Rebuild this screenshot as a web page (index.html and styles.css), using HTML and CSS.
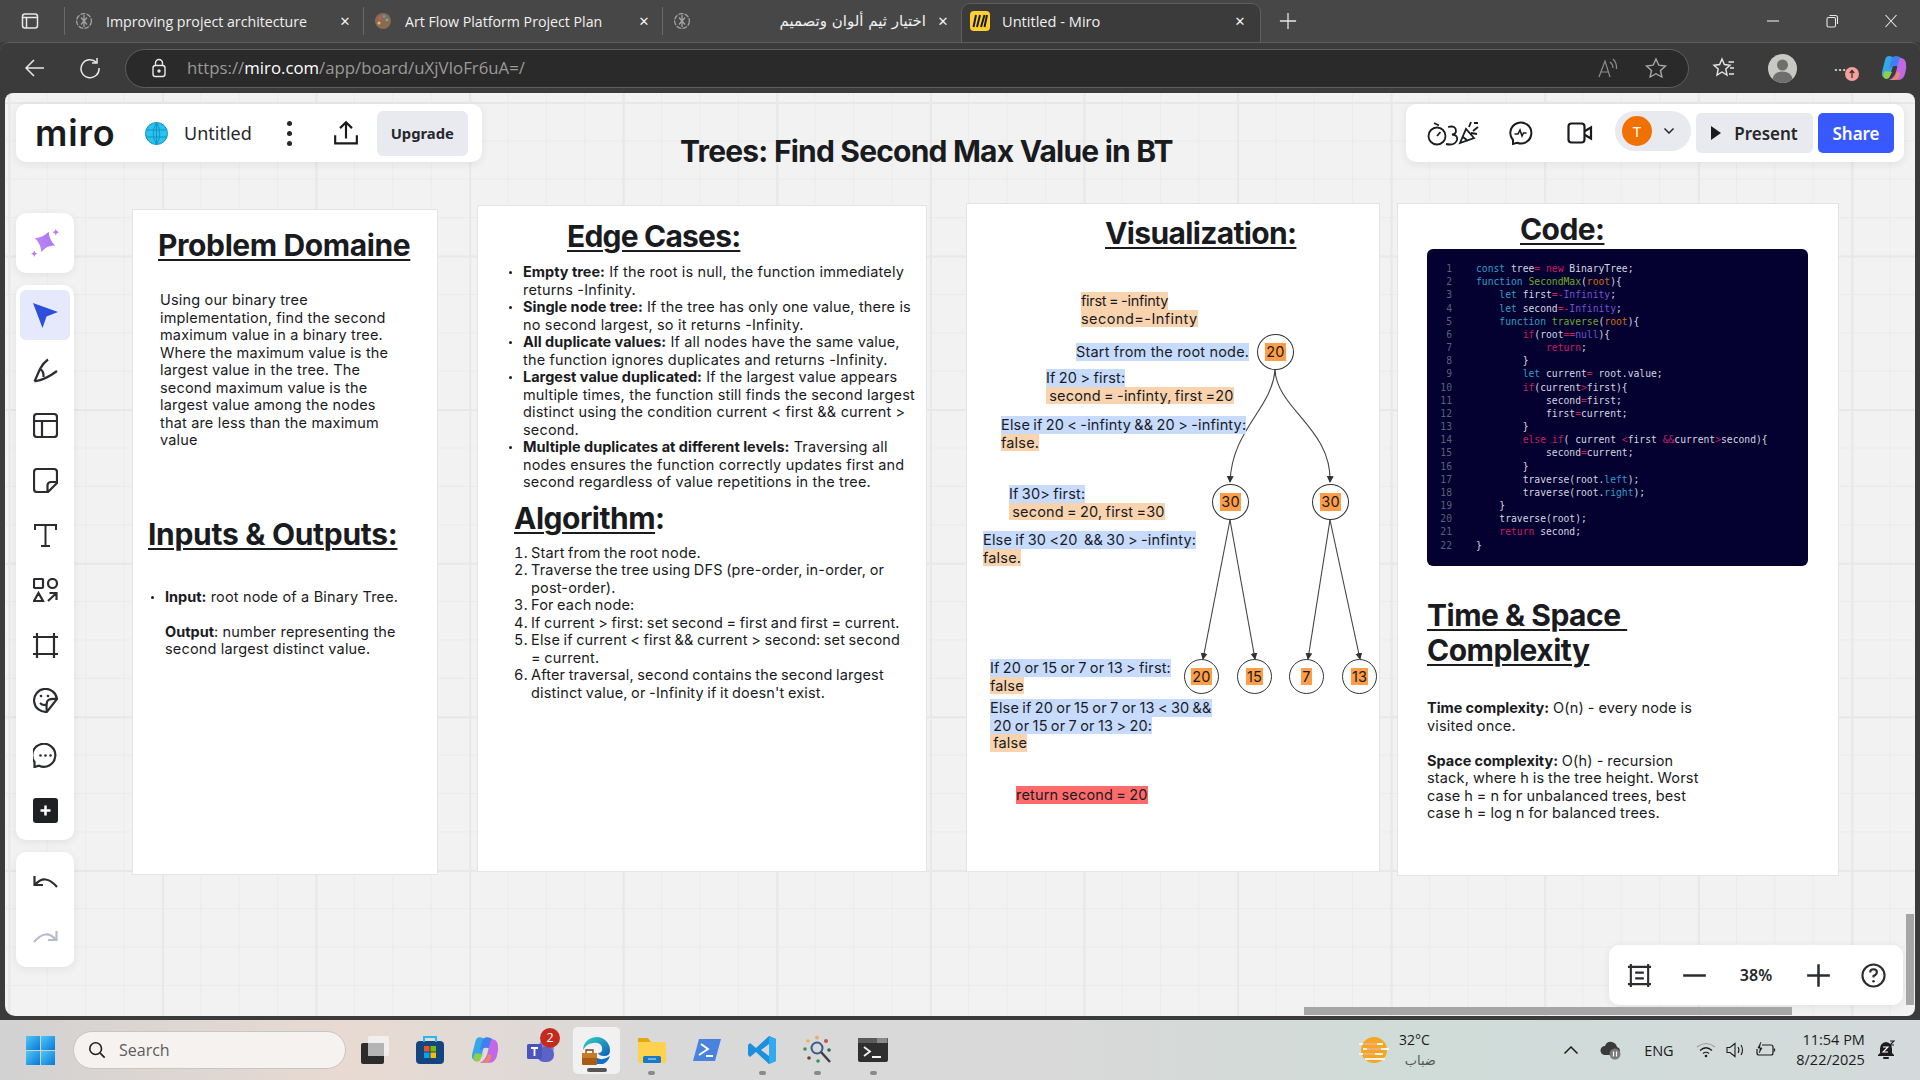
FILE: index.html
```html
<!DOCTYPE html>
<html lang="en">
<head>
    <meta charset="UTF-8">
    <title>Untitled - Miro</title>
    <link rel="stylesheet" href="styles.css">
</head>
<body>
    <svg class="defs" width="0" height="0">
        <defs>
            <marker id="arrow" markerWidth="8" markerHeight="8" refX="6" refY="4" orient="auto" markerUnits="userSpaceOnUse">
                <path d="M0 0.5 L7 4 L0 7.5 Z" fill="#333"/>
            </marker>
            <linearGradient id="spark" x1="0" y1="1" x2="1" y2="0"><stop offset="0" stop-color="#c58bf5"/><stop offset="1" stop-color="#a472f2"/></linearGradient>
            <linearGradient id="startblue" x1="0" y1="0" x2="1" y2="1"><stop offset="0" stop-color="#4fc8f8"/><stop offset="1" stop-color="#0878d6"/></linearGradient>
            <linearGradient id="edgeg" x1="0" y1="0" x2="1" y2="1"><stop offset="0" stop-color="#36d3c4"/><stop offset="1" stop-color="#0c5fb8"/></linearGradient>
        </defs>
    </svg>

    <div class="tabbar">
        <svg class="tab-toggle" viewBox="0 0 18 18" fill="none" stroke="#e8e8e8" stroke-width="1.5"><rect x="1.5" y="2" width="15" height="14" rx="2.5"/><path d="M1.5 5.5H16.5M5.5 5.5V16"/></svg>
        <div class="tab">
            <svg class="favicon" viewBox="0 0 18 18" fill="none" stroke="#a3a3a3" stroke-width="1.3"><circle cx="9" cy="9" r="7.4" stroke-dasharray="5 1.2"/><path d="M6 5.5L12 12.5M12 5.5L6 12.5M9 3V15"/></svg>
            <span class="tab-title">Improving project architecture</span>
            <span class="tab-close">&#10005;</span>
        </div>
        <div class="tab">
            <svg class="favicon" viewBox="0 0 18 18"><circle cx="9" cy="9" r="8" fill="#8a6a55"/><circle cx="6" cy="6" r="1.6" fill="#d9534f"/><circle cx="10" cy="4.5" r="1.4" fill="#5b9bd5"/><circle cx="13" cy="8" r="1.4" fill="#6cb96c"/><circle cx="5" cy="11" r="1.5" fill="#e8c14f"/></svg>
            <span class="tab-title">Art Flow Platform Project Plan</span>
            <span class="tab-close">&#10005;</span>
        </div>
        <div class="tab">
            <svg class="favicon" viewBox="0 0 18 18" fill="none" stroke="#a3a3a3" stroke-width="1.3"><circle cx="9" cy="9" r="7.4" stroke-dasharray="5 1.2"/><path d="M6 5.5L12 12.5M12 5.5L6 12.5M9 3V15"/></svg>
            <span class="tab-title tab-title-ar" dir="rtl" lang="ar">اختيار ثيم ألوان وتصميم</span>
            <span class="tab-close">&#10005;</span>
        </div>
        <div class="tab tab-active">
            <svg class="favicon" viewBox="0 0 20 20"><rect x="0" y="0" width="20" height="20" rx="4" fill="#ffd02f"/><path d="M6 4L3.5 16M10 4L7 16M14.500 4L11 16M17 4L14.500 16" stroke="#1a1a1a" stroke-width="2" fill="none"/></svg>
            <span class="tab-title">Untitled - Miro</span>
            <span class="tab-close">&#10005;</span>
        </div>
        <svg class="tab-new" viewBox="0 0 20 20" fill="none" stroke="#e8e8e8" stroke-width="1.4"><path d="M10 1V19M1 10H19"/></svg>
        <div class="window-controls">
            <svg viewBox="0 0 14 14" fill="none" stroke="#e8e8e8" stroke-width="1.1"><path d="M1 7H13"/></svg>
            <svg viewBox="0 0 14 14" fill="none" stroke="#e8e8e8" stroke-width="1.1"><rect x="2" y="3.500" width="8.500" height="9.500" rx="1.500"/><path d="M4.500 1.500H10.500Q12.500 1.500 12.500 3.500V10"/></svg>
            <svg viewBox="0 0 14 14" fill="none" stroke="#e8e8e8" stroke-width="1.1"><path d="M1.500 1L12.500 13M12.500 1L1.500 13"/></svg>
        </div>
    </div>

    <div class="addressbar">
        <svg class="nav-icon" viewBox="0 0 22 22" fill="none" stroke="#e8e8e8" stroke-width="1.5"><path d="M20 11H2M10 3L2 11L10 19"/></svg>
        <svg class="nav-icon reload" viewBox="0 0 22 22" fill="none" stroke="#e8e8e8" stroke-width="1.5"><path d="M17.500 5.500A9 9 0 1 0 20 11M18 1V6H13"/></svg>
        <div class="urlbox">
            <svg class="lock" viewBox="0 0 18 20" fill="none" stroke="#e8e8e8" stroke-width="1.4"><rect x="3" y="7.500" width="12" height="11" rx="2.500"/><path d="M5.500 7.500V5A3.500 3.500 0 0 1 12.500 5V7.500"/><circle cx="9" cy="13" r="1" fill="#e8e8e8"/></svg>
            <span class="url">https://<b>miro.com</b>/app/board/uXjVIoFr6uA=/</span>
            <svg class="read-aloud" viewBox="0 0 24 24" fill="none" stroke="#8d8d8d" stroke-width="1.2"><path d="M4 21L10 5L15 21M6 16H13.500M15 6Q18 8 18 12M18 3Q22 7 21.500 13"/></svg>
            <svg class="url-star" viewBox="0 0 24 24" fill="none" stroke="#a8a8a8" stroke-width="1.4"><path d="M12 3L14.800 9.200L21.500 10L16.500 14.500L17.900 21L12 17.700L6.100 21L7.500 14.500L2.500 10L9.200 9.200Z"/></svg>
        </div>
        <svg class="fav-list" viewBox="0 0 24 24" fill="none" stroke="#e8e8e8" stroke-width="1.4"><path d="M10 3L12.400 8.500L18 9.200L13.800 13L15 19L10 16L5 19L6.200 13L2 9.200L7.600 8.500Z"/><path d="M16.500 6H22M18 12H22M17 18H22"/></svg>
        <svg class="profile" viewBox="0 0 29 29"><circle cx="14.500" cy="14.500" r="14.500" fill="#c9c9c4"/><circle cx="14.500" cy="11" r="5.500" fill="#6f6f6d"/><path d="M4.500 25Q6 17.500 14.500 17.500Q23 17.500 24.500 25Q20 29 14.500 29Q9 29 4.500 25Z" fill="#6f6f6d"/></svg>
        <div class="more-menu">
            <span class="more-dots">&#8230;</span>
            <svg class="more-badge" viewBox="0 0 14 14"><circle cx="7" cy="7" r="7" fill="#f4a09c"/><path d="M7 11V4M4.800 6L7 3.500L9.200 6" stroke="#3a2a2a" stroke-width="1.200" fill="none"/></svg>
        </div>
        <svg class="copilot" viewBox="0 0 26 28"><path d="M8 2Q5 2 4 6L1 18Q0 23 4 24Q8 24 9.500 20L13 8Q14 2 8 2Z" fill="#35a7e8"/><path d="M4 17Q1 21 3 24Q5 26 8 24L11 18Z" fill="#8fcf4a"/><path d="M15 2Q11 2 10 7L8 15Q12 10 18 13L21 8Q21 2 15 2Z" fill="#3f7ff0"/><path d="M19 4Q24 4 25 9Q26 14 24 20Q22 26 17 26L8 26Q13 24 15 18L17 10Q18 6 19 4Z" fill="#c268e6"/><path d="M8 26Q14 26 16 18L19 19Q18 26 13 26Z" fill="#f28a4f"/></svg>
    </div>

    <main class="board">
        <h1 class="board-title">Trees: Find Second Max Value in BT</h1>

        <section class="panel panel-domain">
            <h2 class="domain-head">Problem Domaine</h2>
            <p class="domain-text">Using our binary tree<br>implementation, find the second<br>maximum value in a binary tree.<br>Where the maximum value is the<br>largest value in the tree. The<br>second maximum value is the<br>largest value among the nodes<br>that are less than the maximum<br>value</p>
            <h2 class="io-head">Inputs &amp; Outputs:</h2>
            <ul class="bullets io-list">
                <li><b>Input:</b> root node of a Binary Tree.<br><br><b>Output</b>: number representing the<br>second largest distinct value.</li>
            </ul>
        </section>

        <section class="panel panel-edge">
            <h2 class="edge-head">Edge Cases:</h2>
            <ul class="bullets edge-list">
                <li><b>Empty tree:</b> If the root is null, the function immediately<br>returns -Infinity.</li>
                <li><b>Single node tree:</b> If the tree has only one value, there is<br>no second largest, so it returns -Infinity.</li>
                <li><b>All duplicate values:</b> If all nodes have the same value,<br>the function ignores duplicates and returns -Infinity.</li>
                <li><b>Largest value duplicated:</b> If the largest value appears<br>multiple times, the function still finds the second largest<br>distinct using the condition current &lt; first &amp;&amp; current &gt;<br>second.</li>
                <li><b>Multiple duplicates at different levels:</b> Traversing all<br>nodes ensures the function correctly updates first and<br>second regardless of value repetitions in the tree.</li>
            </ul>
            <h2 class="algo-head"><u>Algorithm</u>:</h2>
            <ol class="algo-list">
                <li>Start from the root node.</li>
                <li>Traverse the tree using DFS (pre-order, in-order, or<br>post-order).</li>
                <li>For each node:</li>
                <li>If current &gt; first: set second = first and first = current.</li>
                <li>Else if current &lt; first &amp;&amp; current &gt; second: set second<br>= current.</li>
                <li>After traversal, second contains the second largest<br>distinct value, or -Infinity if it doesn't exist.</li>
            </ol>
        </section>

        <section class="panel panel-viz">
            <h2 class="viz-head">Visualization:</h2>
            <svg class="edges" viewBox="0 0 412 667" fill="none" stroke="#444" stroke-width="1.100">
                <path d="M308 166C305 205 265 225 263 278" marker-end="url(#arrow)"/>
                <path d="M308 166C310 205 365 225 363 278" marker-end="url(#arrow)"/>
                <path d="M263 316L236 455" marker-end="url(#arrow)"/>
                <path d="M263 316L288 455" marker-end="url(#arrow)"/>
                <path d="M363 316L341 455" marker-end="url(#arrow)"/>
                <path d="M363 316L393 455" marker-end="url(#arrow)"/>
            </svg>
            <div class="note n1"><span class="peach">first = -infinty</span><span class="peach">second=-Infinty</span></div>
            <div class="note n2"><span class="blue">Start from the root node.</span></div>
            <div class="note n3"><span class="blue">If 20 &gt; first:</span><span class="peach"> second = -infinty, first =20</span></div>
            <div class="note n4"><span class="blue">Else if 20 &lt; -infinty &amp;&amp; 20 &gt; -infinty:</span><span class="peach">false.</span></div>
            <div class="note n5"><span class="blue">If 30&gt; first:</span><span class="peach"> second = 20, first =30</span></div>
            <div class="note n6"><span class="blue">Else if 30 &lt;20  &amp;&amp; 30 &gt; -infinty:</span><span class="peach">false.</span></div>
            <div class="note n7"><span class="blue">If 20 or 15 or 7 or 13 &gt; first:</span><span class="peach">false</span></div>
            <div class="note n8"><span class="blue">Else if 20 or 15 or 7 or 13 &lt; 30 &amp;&amp;</span><span class="blue"> 20 or 15 or 7 or 13 &gt; 20:</span><span class="peach"> false</span></div>
            <div class="note n9"><span class="red">return second = 20</span></div>
            <div class="node node-root"><span>20</span></div>
            <div class="node node-a"><span>30</span></div>
            <div class="node node-b"><span>30</span></div>
            <div class="node leaf leaf-1"><span>20</span></div>
            <div class="node leaf leaf-2"><span>15</span></div>
            <div class="node leaf leaf-3"><span>7</span></div>
            <div class="node leaf leaf-4"><span>13</span></div>
        </section>

        <section class="panel panel-code">
            <h2 class="code-head">Code:</h2>
            <div class="code-block">
<pre class="gutter">1
2
3
4
5
6
7
8
9
10
11
12
13
14
15
16
17
18
19
20
21
22</pre>
<pre class="source"><i class="c">const</i> tree<i class="k">=</i> <i class="k">new</i> BinaryTree;
<i class="c">function</i> <i class="g">SecondMax</i>(<i class="o">root</i>){
    <i class="c">let</i> first<i class="k">=-</i><i class="p">Infinity</i>;
    <i class="c">let</i> second<i class="k">=-</i><i class="p">Infinity</i>;
    <i class="c">function</i> <i class="g">traverse</i>(<i class="o">root</i>){
        <i class="k">if</i>(root<i class="k">==</i><i class="p">null</i>){
            <i class="k">return</i>;
        }
        <i class="c">let</i> current<i class="k">=</i> root.value;
        <i class="k">if</i>(current<i class="k">&gt;</i>first){
            second<i class="k">=</i>first;
            first<i class="k">=</i>current;
        }
        <i class="k">else if</i>( current <i class="k">&lt;</i>first <i class="k">&amp;&amp;</i>current<i class="k">&gt;</i>second){
            second<i class="k">=</i>current;
        }
        traverse(root.<i class="c">left</i>);
        traverse(root.<i class="c">right</i>);
    }
    traverse(root);
    <i class="k">return</i> second;
}</pre>
            </div>
            <h2 class="time-head"><u>Time &amp; Space&nbsp;<br>Complexity</u></h2>
            <p class="time-text"><b>Time complexity:</b> O(n) - every node is<br>visited once.<br><br><b>Space complexity:</b> O(h) - recursion<br>stack, where h is the tree height. Worst<br>case h = n for unbalanced trees, best<br>case h = log n for balanced trees.</p>
        </section>

        <div class="floating brand-bar">
            <span class="logo">miro</span>
            <svg class="globe" viewBox="0 0 23 23" fill="#28c4ee" stroke="#1592c4" stroke-width="1"><circle cx="11.500" cy="11.500" r="11"/><path fill="none" d="M1 8H22M1 15H22M11.500 .5V22.500M11.500 .5Q5 11.500 11.500 22.500M11.500 .5Q18 11.500 11.500 22.500"/></svg>
            <span class="board-name">Untitled</span>
            <div class="kebab"><i></i><i></i><i></i></div>
            <svg class="share-icon" viewBox="0 0 24 24" fill="none" stroke="#1a1b1e" stroke-width="2"><path d="M12 17V2M6.500 7.500L12 2L17.500 7.500M2 14V21.500H22V14"/></svg>
            <button class="upgrade">Upgrade</button>
        </div>

        <div class="floating collab-bar">
            <svg class="reactions" viewBox="0 0 53 28" fill="none" stroke="#1a1b1e" stroke-width="1.800"><circle cx="10" cy="17" r="8.500"/><path d="M10 17L13.500 13M7 4L12 6.500"/><path d="M21 8Q29 6 29 12Q29 15 25 15.500Q31 16 30 21Q28 27 19 25"/><path d="M33 24L39 10L47 19ZM36 18L41 22M42 8L44 3M46 12L51 8M47 4H51M44 14L50 15"/></svg>
            <svg class="chat-icon" viewBox="0 0 25 25" fill="none" stroke="#1a1b1e" stroke-width="2"><path d="M5 23V19A10.500 10.500 0 1 1 9 21.800Z"/><path d="M6.500 13H10L12 9L14 15L15.500 12H18.500" stroke-width="1.600"/></svg>
            <svg class="video-icon" viewBox="0 0 26 24" fill="none" stroke="#1a1b1e" stroke-width="2.200"><rect x="1.500" y="2.500" width="16" height="19" rx="3"/><path d="M18 10L24 6.500V17.500L18 14"/></svg>
            <div class="avatar-pill"><span class="avatar">T</span><svg class="chev" viewBox="0 0 12 8" fill="none" stroke="#1a1b1e" stroke-width="1.400"><path d="M1.500 1.500L6 6L10.500 1.500"/></svg></div>
            <button class="present"><svg viewBox="0 0 10 14"><path d="M0 0L10 7L0 14Z" fill="#1a1b1e"/></svg>Present</button>
            <button class="share">Share</button>
        </div>

        <div class="floating tools tools-ai">
            <div class="tool"><svg viewBox="0 0 26 26" fill="url(#spark)"><path d="M13 2Q16 9 23 12Q16 14 13 22Q10 15 3 12Q10 9 13 2Z" transform="rotate(20 13 12)"/><path d="M23 0Q23.500 2.500 26 3Q23.500 3.500 23 6Q22.500 3.500 20 3Q22.500 2.500 23 0Z"/><path d="M3 20Q3.500 22.500 6 23Q3.500 23.500 3 26Q2.500 23.500 0 23Q2.500 22.500 3 20Z"/></svg></div>
        </div>
        <div class="floating tools tools-main">
            <div class="tool tool-active"><svg viewBox="0 0 25 25"><path d="M0 0L25 9L13.500 13.500L9.500 25Z" fill="#2c4fdc"/></svg></div>
            <div class="tool"><svg viewBox="0 0 25 25" fill="none" stroke="#2b2c30" stroke-width="2.200"><path d="M1.500 23.500L7 11Q10 5 15 1.500M1.500 23.500Q12 22 24 13M7 11Q11 13 10.500 19"/></svg></div>
            <div class="tool"><svg viewBox="0 0 25 25" fill="none" stroke="#2b2c30" stroke-width="2.200"><rect x="1" y="1" width="23" height="23" rx="3"/><path d="M1 8H24M9 8V24"/></svg></div>
            <div class="tool"><svg viewBox="0 0 25 25" fill="none" stroke="#2b2c30" stroke-width="2.200"><path d="M15 24H4Q1 24 1 21V4Q1 1 4 1H21Q24 1 24 4V15ZM24 14H18Q15 14 14.500 17V24"/></svg></div>
            <div class="tool"><svg viewBox="0 0 25 25" fill="none" stroke="#2b2c30" stroke-width="2"><path d="M2 7V2H23V7M12.500 2V23M8 23H17"/></svg></div>
            <div class="tool"><svg viewBox="0 0 25 25" fill="none" stroke="#2b2c30" stroke-width="2.200"><rect x="1" y="1" width="9" height="9" rx="1"/><circle cx="19.500" cy="5.500" r="4.500"/><path d="M5.500 15L10 23H1ZM15 23L23.500 15M16.500 15H23.500V22"/></svg></div>
            <div class="tool"><svg viewBox="0 0 25 25" fill="none" stroke="#2b2c30" stroke-width="2.200"><path d="M0 4H25M0 21H25M4 0V25M21 0V25"/></svg></div>
            <div class="tool"><svg viewBox="0 0 25 25" fill="none" stroke="#2b2c30" stroke-width="2.200"><path d="M14 23.800A11.500 11.500 0 1 1 24 11L14 23.800ZM24 11Q15 10 14 14Q13 18 14 23.800"/><path d="M7 15Q10 18 13 16.500"/><circle cx="8" cy="8" r="1.300" fill="#2b2c30" stroke="none"/><circle cx="15" cy="8" r="1.300" fill="#2b2c30" stroke="none"/></svg></div>
            <div class="tool"><svg viewBox="0 0 25 25" fill="none" stroke="#2b2c30" stroke-width="2.200"><path d="M1.500 24V19A11.500 11.500 0 1 1 6 22.700L1.500 24Z"/><circle cx="7.500" cy="12.500" r="1.300" fill="#2b2c30" stroke="none"/><circle cx="12.500" cy="12.500" r="1.300" fill="#2b2c30" stroke="none"/><circle cx="17.500" cy="12.500" r="1.300" fill="#2b2c30" stroke="none"/></svg></div>
            <div class="tool"><svg viewBox="0 0 25 25"><rect width="25" height="25" rx="3" fill="#1f2024"/><path d="M12.500 7.500V17.500M7.500 12.500H17.500" stroke="#fff" stroke-width="2.500"/></svg></div>
        </div>
        <div class="floating tools tools-history">
            <div class="tool"><svg viewBox="0 0 25 14" fill="none" stroke="#2b2c30" stroke-width="2.200"><path d="M1.500 1V10H10M2 10Q12 -2 24 12"/></svg></div>
            <div class="tool"><svg viewBox="0 0 25 14" fill="none" stroke="#b9bbcb" stroke-width="2.200"><path d="M23.500 1V10H15M23 10Q13 -2 1 12"/></svg></div>
        </div>

        <div class="floating zoom-bar">
            <svg viewBox="0 0 26 26" fill="none" stroke="#2b2c30" stroke-width="2.200"><path d="M1 4H25M1 22H25M4 1V25M22 1V25M8.500 10H17.500M8.500 16H17.500"/></svg>
            <svg viewBox="0 0 22 22" fill="none" stroke="#2b2c30" stroke-width="2.200"><path d="M1 11H21"/></svg>
            <span class="zoom-value">38%</span>
            <svg viewBox="0 0 22 22" fill="none" stroke="#2b2c30" stroke-width="2.200"><path d="M1 11H21M11 1V21"/></svg>
            <svg viewBox="0 0 26 26" fill="none" stroke="#2b2c30" stroke-width="2.200"><circle cx="13" cy="13" r="11.500"/><path d="M9.500 10Q9.500 6.500 13 6.500Q16.500 6.500 16.500 9.500Q16.500 11.500 13 13.500V15"/><circle cx="13" cy="19" r="1.300" fill="#2b2c30" stroke="none"/></svg>
        </div>

        <div class="scroll-v"></div>
        <div class="scroll-h"></div>
    </main>

    <footer class="taskbar">
        <svg class="start" viewBox="0 0 29 29" fill="url(#startblue)"><rect width="14" height="14"/><rect x="15" width="14" height="14"/><rect y="15" width="14" height="14"/><rect x="15" y="15" width="14" height="14"/></svg>
        <div class="search">
            <svg viewBox="0 0 20 20" fill="none" stroke="#222" stroke-width="1.800"><circle cx="8.500" cy="8.500" r="6.500"/><path d="M13.500 13.500L18.500 18.500"/></svg>
            <span>Search</span>
        </div>
        <div class="apps">
            <div class="app"><svg viewBox="0 0 30 30"><rect x="1" y="8" width="23" height="21" rx="2" fill="#2c2c2c"/><rect x="8" y="1" width="21" height="20" rx="2" fill="#f2f2f2" fill-opacity=".85"/><rect x="8" y="8" width="16" height="13" fill="#b5b5b5"/></svg></div>
            <div class="app"><svg viewBox="0 0 30 30"><rect x="1" y="6" width="28" height="23" rx="4" fill="#15457f"/><path d="M9 7V2H21V7" fill="none" stroke="#26b8ee" stroke-width="2"/><rect x="9" y="11" width="5.500" height="5.500" fill="#e8512b"/><rect x="15.500" y="11" width="5.500" height="5.500" fill="#7fba00"/><rect x="9" y="17.500" width="5.500" height="5.500" fill="#04a5e8"/><rect x="15.500" y="17.500" width="5.500" height="5.500" fill="#ffb900"/></svg></div>
            <div class="app"><svg viewBox="0 0 26 28"><path d="M8 2Q5 2 4 6L1 18Q0 23 4 24Q8 24 9.500 20L13 8Q14 2 8 2Z" fill="#35a7e8"/><path d="M4 17Q1 21 3 24Q5 26 8 24L11 18Z" fill="#8fcf4a"/><path d="M15 2Q11 2 10 7L8 15Q12 10 18 13L21 8Q21 2 15 2Z" fill="#3f7ff0"/><path d="M19 4Q24 4 25 9Q26 14 24 20Q22 26 17 26L8 26Q13 24 15 18L17 10Q18 6 19 4Z" fill="#c268e6"/><path d="M8 26Q14 26 16 18L19 19Q18 26 13 26Z" fill="#f28a4f"/></svg></div>
            <div class="app app-teams">
                <svg viewBox="0 0 30 30"><circle cx="20" cy="13" r="8" fill="#7b83eb"/><rect x="11" y="12" width="17" height="15" rx="7" fill="#5b63c9"/><rect x="1" y="9" width="15" height="15" rx="1.500" fill="#4b53bc"/><path d="M5 13H12M8.500 13V21" stroke="#fff" stroke-width="1.800"/></svg>
                <span class="badge">2</span>
            </div>
            <div class="app app-active"><svg viewBox="0 0 30 30"><path d="M2 14A13.500 13.500 0 0 1 29 15Q29 20 23 20Q18 20 17 17Q22 17 21 11Q19 6 12 7Q5 8 2 14Z" fill="url(#edgeg)"/><path d="M14 28H22Q27 26 29 20Q22 25 16 22Z" fill="#1170cf"/><rect x="1" y="17" width="15" height="12" rx="1" fill="#a85b12"/><rect x="1" y="17" width="15" height="5" fill="#c97a26"/><path d="M5 17V14H12V17" fill="none" stroke="#7a3f0a" stroke-width="1.300"/></svg></div>
            <div class="app"><svg viewBox="0 0 30 30"><path d="M1 3H11L14 7H29V28H1Z" fill="#e3a812"/><rect x="1" y="7" width="28" height="21" fill="#ffd24d"/><rect x="6" y="21" width="18" height="7" rx="1.500" fill="#1b78c4"/><path d="M11 24H19" stroke="#cfe8fb" stroke-width="1"/></svg></div>
            <div class="app"><svg viewBox="0 0 30 30"><path d="M7 4H29L23 26H1Z" fill="#4a82e0"/><path d="M9 9L16 14L7 20M14 21H21" fill="none" stroke="#fff" stroke-width="1.800"/></svg></div>
            <div class="app"><svg viewBox="0 0 30 30"><path d="M22 1L29 4V26L22 29L9 17L3 22L1 20V10L3 8L9 13ZM22 9L14 15L22 21Z" fill="#1c8fdd"/><path d="M22 1L29 4V26L22 29Z" fill="#32aaf0"/></svg></div>
            <div class="app"><svg viewBox="0 0 30 30" fill="none"><circle cx="14" cy="13" r="5.500" stroke="#355c8c" stroke-width="2"/><path d="M18 17L27 27" stroke="#3a3f4a" stroke-width="2.500"/><circle cx="14" cy="2.500" r="2" fill="#e8b15b"/><circle cx="23" cy="6" r="2" fill="#c9504f"/><circle cx="5" cy="6" r="1.800" fill="#e8b15b"/><circle cx="2" cy="14" r="1.800" fill="#3d8f5a"/><circle cx="26" cy="15" r="1.800" fill="#2c6e49"/><circle cx="6" cy="23" r="1.800" fill="#5b4d2e"/><circle cx="15" cy="26" r="1.800" fill="#3d8f5a"/></svg></div>
            <div class="app"><svg viewBox="0 0 30 30"><rect y="3" width="30" height="24" rx="2" fill="#2f2f2f"/><rect x="0" y="3" width="30" height="5" fill="#5a5a5a"/><rect x="19" y="3" width="10" height="5" fill="#8a8a8a"/><path d="M6 12L12 16.500L6 21M14 22H23" stroke="#f2f2f2" stroke-width="1.800" fill="none"/></svg></div>
        </div>
        <svg class="weather" viewBox="0 0 30 30"><circle cx="15" cy="15" r="13" fill="#f5a623"/><path d="M0 9H24M4 14H30M0 19H24M6 24H26" stroke="#f7f3e6" stroke-width="2"/><path d="M4 9H18M8 14H22M4 19H16" stroke="#e8691f" stroke-width="1"/></svg>
        <div class="weather-text"><span>32°C</span><span class="weather-ar" dir="rtl" lang="ar">ضباب</span></div>
        <svg class="tray-caret" viewBox="0 0 16 10" fill="none" stroke="#1c1c1c" stroke-width="1.500"><path d="M1.500 8.500L8 2L14.500 8.500"/></svg>
        <svg class="tray-cloud" viewBox="0 0 22 20" fill="#3a3a3a"><path d="M5 15A4.500 4.500 0 0 1 5 6Q7 1 12 2Q16 3 17 7Q20 8 20 11V12H12L10 15Z"/><circle cx="15" cy="14" r="5.500" fill="#7a7a7a"/><path d="M13.500 11.500V16.500M16.500 11.500V16.500" stroke="#fff" stroke-width="1.200"/></svg>
        <span class="tray-lang">ENG</span>
        <svg class="tray-wifi" viewBox="0 0 20 16" fill="none" stroke="#9a9a9a" stroke-width="1.200"><path d="M1 5Q10 -2 19 5"/><path d="M4 8.500Q10 3 16 8.500" stroke="#1c1c1c"/><path d="M7 11.500Q10 9 13 11.500" stroke="#1c1c1c"/><circle cx="10" cy="14" r="1.300" fill="#1c1c1c" stroke="none"/></svg>
        <svg class="tray-vol" viewBox="0 0 20 16" fill="none" stroke="#1c1c1c" stroke-width="1.100"><path d="M1 5.500H4L9 1.500V14.500L4 10.500H1ZM12 5Q14 8 12 11M15 3Q18 8 15 13"/></svg>
        <svg class="tray-batt" viewBox="0 0 20 16" fill="none" stroke="#1c1c1c" stroke-width="1.200"><path d="M6 3H15Q17 3 17 5V11Q17 13 15 13H3Q1 13 1 11V7M18.500 6.500V9.500"/><path d="M5 0L2 6H6L3 11" fill="#1c1c1c" stroke-width=".800"/></svg>
        <div class="clock"><span>11:54 PM</span><span>8/22/2025</span></div>
        <svg class="tray-bell" viewBox="0 0 20 20"><path d="M10 2Q4 3 4 9V13L2 15V16H18V15L16 13V9Q16 3 10 2Z" fill="#1c1c1c"/><rect x="7" y="17" width="6" height="2" rx="1" fill="#1c1c1c"/><path d="M7 7H12L7 12H12" stroke="#fff" stroke-width="1.100" fill="none"/><path d="M14 1H18L14 5H18" stroke="#1c1c1c" stroke-width="1.100" fill="none"/></svg>
    </footer>
</body>
</html>
```
FILE: styles.css
```css
* {
    box-sizing: border-box;
}
body {
    margin: 0;
    width: 1920px;
    height: 1080px;
    overflow: hidden;
    background: #3b3b3b;
    font-family: "Open Sans", "DejaVu Sans", sans-serif;
    color: #1a1b1e;
}
svg {
    display: block;
    flex: none;
}
h2 {
    margin: 0;
    font-size: 30px;
    line-height: 35px;
    font-weight: 700;
    letter-spacing: -.5px;
    text-decoration: underline;
    text-decoration-thickness: 2px;
    text-underline-offset: 3px;
}
h2 u {
    text-decoration: underline;
    text-decoration-thickness: 2px;
    text-underline-offset: 3px;
}
p, ul, ol {
    margin: 0;
    padding: 0;
}
.defs {
    position: absolute;
}

/* browser tabs */
.tabbar {
    display: flex;
    align-items: flex-end;
    height: 42px;
    padding-left: 21px;
    background: #474747;
    color: #f0f0f0;
    font-size: 14.2px;
}
.tab-toggle {
    width: 18px;
    height: 18px;
    margin: 0 25px 12px 0;
}
.tab {
    display: flex;
    align-items: center;
    width: 299px;
    height: 28px;
    margin-bottom: 7px;
    padding: 0 11px 0 10px;
    border-left: 1px solid #6a6a6a;
}
.favicon {
    width: 18px;
    height: 18px;
    margin-right: 13px;
}
.tab-title {
    flex: 1;
    white-space: nowrap;
}
.tab-title-ar {
    margin-right: 10px;
    font-family: "DejaVu Sans", sans-serif;
    font-size: 15px;
}
.tab-close {
    width: 14px;
    font-size: 13px;
    text-align: center;
}
.tab-active {
    width: 300px;
    height: 39px;
    margin-bottom: 0;
    padding: 0 13px 5px 8px;
    border: 1px solid #5e5e5e;
    border-bottom: 0;
    border-radius: 9px 9px 0 0;
    background: #3b3b3b;
    font-size: 14.6px;
}
.tab-active .favicon {
    width: 20px;
    height: 20px;
    margin-right: 12px;
}
.tab-new {
    width: 18px;
    height: 18px;
    margin: 0 0 12px 18px;
}
.window-controls {
    display: flex;
    gap: 45px;
    margin: 0 22px 14px auto;
}
.window-controls svg {
    width: 14px;
    height: 14px;
}

/* address bar */
.addressbar {
    display: flex;
    align-items: center;
    height: 51px;
    padding-left: 24px;
    border-top: 1px solid #5e5e5e;
    border-radius: 9px 9px 0 0;
}
.nav-icon {
    width: 22px;
    height: 22px;
}
.reload {
    margin-left: 33px;
}
.urlbox {
    display: flex;
    align-items: center;
    width: 1564px;
    height: 39px;
    margin-left: 24px;
    padding: 0 20px 0 24px;
    border: 1px solid #5f5f5f;
    border-radius: 20px;
    background: #2a2a2a;
}
.lock {
    width: 18px;
    height: 20px;
}
.url {
    margin: -2px 0 0 19px;
    color: #9a9a9a;
    font-size: 16.8px;
    white-space: nowrap;
}
.url b {
    color: #fff;
    font-weight: 400;
}
.read-aloud {
    width: 24px;
    height: 24px;
    margin-left: auto;
}
.url-star {
    width: 24px;
    height: 24px;
    margin-left: 25px;
}
.fav-list {
    width: 24px;
    height: 24px;
    margin-left: 23px;
}
.profile {
    width: 29px;
    height: 29px;
    margin-left: 32px;
}
.more-menu {
    position: relative;
    width: 24px;
    height: 24px;
    margin-left: 31px;
    color: #e8e8e8;
    font-size: 16px;
    line-height: 18px;
    text-align: center;
}
.more-badge {
    position: absolute;
    left: 17px;
    top: 11px;
    width: 14px;
    height: 14px;
}
.copilot {
    width: 26px;
    height: 28px;
    margin-left: 29px;
}

/* miro board */
.board {
    position: relative;
    height: 923px;
    margin: 0 5px;
    border-radius: 8px 8px 8px 10px;
    overflow: hidden;
    background-color: #f2f2f2;
    background-image:
        linear-gradient(to right, #e8e8e8 2px, transparent 2px),
        linear-gradient(to bottom, #e8e8e8 2px, transparent 2px),
        linear-gradient(to right, #ebebeb 1px, transparent 1px),
        linear-gradient(to bottom, #ebebeb 1px, transparent 1px);
    background-size: 153.6px 153.6px, 153.6px 153.6px, 38.4px 38.4px, 38.4px 38.4px;
    background-position: 157px 0, 0 9px, 3.4px 0, 0 9px;
    font-family: Inter, "Liberation Sans", sans-serif;
}
.board-title {
    position: absolute;
    left: 675px;
    top: 41px;
    margin: 0;
    font-size: 30px;
    line-height: 35px;
    font-weight: 700;
    letter-spacing: -.8px;
    white-space: nowrap;
}
.panel {
    position: absolute;
    border: 1px solid #e4e4e4;
    background: #fff;
    font-size: 14.5px;
    line-height: 17.5px;
    letter-spacing: .17px;
    white-space: nowrap;
}
.panel b {
    font-weight: 700;
    letter-spacing: 0;
}
.panel-domain {
    left: 127px;
    top: 116px;
    width: 306px;
    height: 666px;
    padding-top: 18px;
}
.domain-head {
    margin-left: 25px;
    letter-spacing: -.4px;
}
.domain-text {
    margin: 28px 0 0 27px;
}
.io-head {
    margin: 68px 0 0 15px;
    letter-spacing: -.3px;
}
.bullets {
    list-style: none;
}
.bullets li {
    position: relative;
}
.bullets li::before {
    content: "";
    position: absolute;
    left: -14px;
    top: 8px;
    width: 3px;
    height: 3px;
    border-radius: 50%;
    background: #1a1b1e;
}
.io-list {
    margin: 36px 0 0 32px;
}
.panel-edge {
    left: 472px;
    top: 112px;
    width: 450px;
    height: 667px;
    padding-top: 13px;
}
.edge-head {
    margin-left: 89px;
    letter-spacing: -.8px;
}
.edge-list {
    margin: 9px 0 0 45px;
}
.algo-head {
    margin: 10px 0 0 36px;
    text-decoration: none;
}
.algo-list {
    margin: 8px 0 0 53px;
    word-spacing: -.8px;
}
.panel-viz {
    left: 961px;
    top: 110px;
    width: 414px;
    height: 669px;
    padding-top: 12px;
}
.viz-head {
    margin-left: 138px;
    letter-spacing: -.65px;
}
.edges {
    position: absolute;
    left: 0;
    top: 0;
    width: 412px;
    height: 667px;
}
.note {
    position: absolute;
    display: flex;
    flex-direction: column;
    align-items: flex-start;
    white-space: pre;
    word-spacing: -1px;
}
.note span {
    display: block;
    height: 17.5px;
}
.peach {
    background: #f8d3ae;
}
.blue {
    background: #c6dbfe;
}
.red {
    background: #ff6b6b;
}
.n1 { left: 114px; top: 88px; }
.n1 span:first-child { letter-spacing: -.3px; }
.n1 span:last-child { letter-spacing: .45px; }
.n2 { left: 109px; top: 139px; word-spacing: 0; }
.n3 { left: 79px; top: 165px; }
.n4 { left: 34px; top: 212px; }
.n5 { left: 42px; top: 281px; }
.n6 { left: 16px; top: 327px; }
.n7 { left: 23px; top: 455px; }
.n8 { left: 23px; top: 495px; }
.n9 { left: 49px; top: 582px; }
.node {
    position: absolute;
    display: flex;
    align-items: center;
    justify-content: center;
    width: 37px;
    height: 36px;
    border: 1.5px solid #333;
    border-radius: 50%;
    background: #fff;
}
.node span {
    padding: 0 1px;
    background: #ff9d48;
}
.leaf {
    width: 35px;
    height: 35px;
}
.node-root { left: 290px; top: 130px; }
.node-a { left: 245px; top: 280px; }
.node-b { left: 345px; top: 280px; }
.leaf-1 { left: 217px; top: 455px; }
.leaf-2 { left: 270px; top: 455px; }
.leaf-3 { left: 322px; top: 455px; }
.leaf-4 { left: 375px; top: 455px; }
.panel-code {
    left: 1392px;
    top: 110px;
    width: 442px;
    height: 673px;
    padding-top: 8px;
}
.code-head {
    margin-left: 122px;
    letter-spacing: -.6px;
}
.code-block {
    display: flex;
    gap: 24px;
    width: 381px;
    height: 317px;
    margin: 2px 0 0 29px;
    padding-top: 13px;
    border-radius: 6px;
    background: #04002f;
    letter-spacing: 0;
}
.code-block pre {
    margin: 0;
    font-family: "DejaVu Sans Mono", monospace;
    font-size: 9.7px;
    line-height: 13.17px;
}
.source {
    color: #d5d7e2;
}
.gutter {
    width: 25px;
    text-align: right;
    color: #5d6079;
}
.source i {
    font-style: normal;
}
.c { color: #2e9fc4; }
.k { color: #cb1b66; }
.g { color: #72ab1f; }
.o { color: #cc6e16; }
.p { color: #7453d4; }
.time-head {
    margin: 32px 0 0 29px;
    text-decoration: none;
}
.time-text {
    margin: 31px 0 0 29px;
    word-spacing: -.4px;
}

/* floating miro toolbars */
.floating {
    position: absolute;
    border-radius: 10px;
    background: #fff;
    box-shadow: 0 2px 8px rgba(34, 36, 40, .08);
    font-family: "Noto Sans", "Open Sans", sans-serif;
}
.brand-bar {
    left: 11px;
    top: 11px;
    display: flex;
    align-items: center;
    width: 466px;
    height: 58px;
    padding-left: 19px;
}
.logo {
    width: 80px;
    font-family: Inter, sans-serif;
    font-size: 36px;
    font-weight: 600;
    letter-spacing: .8px;
    line-height: 40px;
}
.globe {
    width: 23px;
    height: 23px;
    margin-left: 30px;
}
.board-name {
    margin-left: 16px;
    color: #26272b;
    font-size: 18px;
}
.kebab {
    display: flex;
    flex-direction: column;
    gap: 5px;
    margin-left: 35px;
}
.kebab i {
    display: block;
    width: 5px;
    height: 5px;
    border-radius: 50%;
    background: #26272b;
}
.share-icon {
    width: 26px;
    height: 26px;
    margin-left: 41px;
}
.upgrade {
    width: 91px;
    height: 45px;
    margin-left: 18px;
    border: 0;
    border-radius: 6px;
    background: #e9eaef;
    color: #26272b;
    font: 700 14.8px "Noto Sans", sans-serif;
}
.collab-bar {
    left: 1401px;
    top: 11px;
    display: flex;
    align-items: center;
    width: 498px;
    height: 58px;
    padding-left: 21px;
}
.reactions {
    width: 53px;
    height: 28px;
}
.chat-icon {
    width: 25px;
    height: 25px;
    margin-left: 28px;
}
.video-icon {
    width: 26px;
    height: 24px;
    margin-left: 34px;
}
.avatar-pill {
    display: flex;
    align-items: center;
    width: 76px;
    height: 40px;
    margin: -4px 0 0 22px;
    padding-left: 7px;
    border-radius: 20px;
    background: #e9eaef;
}
.avatar {
    width: 30px;
    height: 30px;
    border-radius: 50%;
    background: #f07000;
    color: #fff;
    font-size: 15px;
    line-height: 30px;
    text-align: center;
}
.chev {
    width: 12px;
    height: 8px;
    margin-left: 11px;
}
.present {
    display: flex;
    align-items: center;
    justify-content: center;
    gap: 13px;
    width: 117px;
    height: 40px;
    margin-left: 5px;
    border: 0;
    border-radius: 5px;
    background: #e9eaef;
    color: #26272b;
    font: 600 17px "Noto Sans", sans-serif;
}
.present svg {
    width: 10px;
    height: 14px;
}
.share {
    width: 76px;
    height: 40px;
    margin-left: 5px;
    border: 0;
    border-radius: 5px;
    background: #3859ff;
    color: #fff;
    font: 600 17px "Noto Sans", sans-serif;
}
.tools {
    left: 11px;
    width: 58px;
    padding: 5px 4px;
    display: flex;
    flex-direction: column;
    gap: 5px;
}
.tools-ai {
    top: 120px;
    height: 60px;
}
.tools-main {
    top: 192px;
    height: 555px;
}
.tools-history {
    top: 759px;
    height: 115px;
}
.tool {
    display: flex;
    align-items: center;
    justify-content: center;
    height: 50px;
    border-radius: 6px;
}
.tool svg {
    width: 25px;
    height: 25px;
}
.tools-ai .tool svg {
    width: 28px;
    height: 28px;
}
.tools-history svg {
    height: 14px;
}
.tool-active {
    background: #e6e9fb;
}
.zoom-bar {
    left: 1604px;
    top: 852px;
    display: grid;
    grid-template-columns: 60px 50px 74px 50px 60px;
    align-items: center;
    justify-items: center;
    width: 294px;
    height: 60px;
}
.zoom-bar svg {
    width: 25px;
    height: 25px;
}
.zoom-value {
    color: #26272b;
    font-size: 16px;
    font-weight: 600;
}
.scroll-v {
    position: absolute;
    left: 1901px;
    top: 821px;
    width: 8px;
    height: 91px;
    background: #a6a6a6;
}
.scroll-h {
    position: absolute;
    left: 1299px;
    top: 914px;
    width: 488px;
    height: 8px;
    background: #a6a6a6;
}

/* windows taskbar */
.taskbar {
    display: flex;
    align-items: center;
    height: 60px;
    margin-top: 4px;
    padding-left: 26px;
    background: linear-gradient(to right, #d2d2d2 0, #e8dad2 18%, #d9d9d9 34%, #d9d9d9 55%, #cfdcd8 75%, #d4dadb 100%);
    color: #1c1c1c;
}
.start {
    width: 29px;
    height: 29px;
}
.search {
    display: flex;
    align-items: center;
    width: 273px;
    height: 38px;
    margin-left: 18px;
    padding-left: 14px;
    border: 1px solid #c8c6c3;
    border-radius: 19px;
    background: #f6f2ef;
    color: #5c5c5c;
    font-size: 16px;
}
.search svg {
    width: 18px;
    height: 18px;
    margin-right: 13px;
}
.apps {
    display: flex;
    margin-left: 1px;
}
.app {
    position: relative;
    display: flex;
    align-items: center;
    justify-content: center;
    width: 55.4px;
    height: 56px;
}
.app svg {
    width: 30px;
    height: 30px;
}
.app::after {
    content: "";
    position: absolute;
    left: 24px;
    bottom: 3px;
    width: 7px;
    height: 4px;
    border-radius: 2px;
    background: #8a8a8a;
}
.app:nth-child(-n+4)::after,
.app:nth-child(7)::after {
    display: none;
}
.app-active {
    padding: 5px 4px 4px;
    border-radius: 9px;
    background: #f1f1f1 content-box;
}
.app-active::after {
    left: 18px;
    width: 20px;
    bottom: 6px;
    background: #555;
}
.badge {
    position: absolute;
    left: 27px;
    top: 6px;
    width: 20px;
    height: 20px;
    border-radius: 50%;
    background: #c42b1c;
    color: #fff;
    font-size: 12.5px;
    line-height: 20px;
    text-align: center;
}
.weather {
    width: 30px;
    height: 30px;
    margin-left: 458px;
}
.weather-text {
    display: flex;
    flex-direction: column;
    width: 37px;
    margin-left: 10px;
    font-size: 14px;
    line-height: 21px;
}
.weather-ar {
    color: #555;
    font-family: "DejaVu Sans", sans-serif;
    font-size: 13px;
    text-align: right;
}
.tray-caret {
    width: 16px;
    height: 10px;
    margin-left: 127px;
}
.tray-cloud {
    width: 22px;
    height: 20px;
    margin-left: 21px;
}
.tray-lang {
    width: 34px;
    margin-left: 20px;
    font-size: 14.5px;
    text-align: center;
}
.tray-wifi {
    width: 20px;
    height: 16px;
    margin-left: 20px;
}
.tray-vol,
.tray-batt {
    width: 20px;
    height: 16px;
    margin-left: 10px;
}
.clock {
    display: flex;
    flex-direction: column;
    width: 80px;
    margin-left: 9px;
    font-size: 14.5px;
    line-height: 20px;
    text-align: right;
}
.tray-bell {
    width: 20px;
    height: 20px;
    margin-left: 11px;
}
```
